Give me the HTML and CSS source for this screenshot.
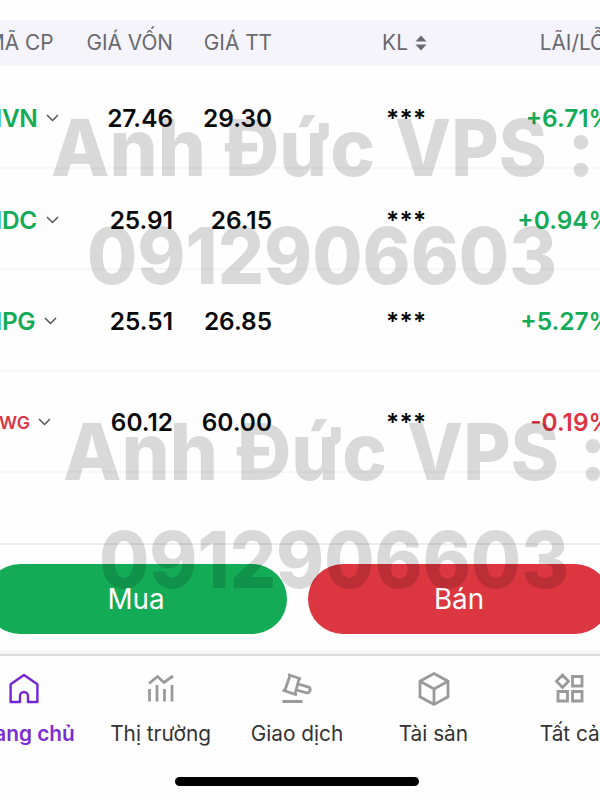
FILE: index.html
```html
<!DOCTYPE html>
<html lang="vi">
<head>
    <meta charset="UTF-8">
    <meta name="viewport" content="width=device-width, initial-scale=1.0">
    <title>Danh mục</title>
    <link rel="stylesheet" href="styles.css">
</head>
<body>
    <div class="app">
        <main class="portfolio">
            <div class="row head">
                <span class="code">MÃ CP</span>
                <span class="cost">GIÁ VỐN</span>
                <span class="price">GIÁ TT</span>
                <span class="volume">KL
                    <svg class="sort" width="12" height="16" viewBox="0 0 12 16"><path d="M6 0.5L11.500 6.500H0.500zM6 15.500L0.500 9.500H11.500z" fill="#69696f"/></svg>
                </span>
                <span class="profit">LÃI/LỖ</span>
            </div>
            <div class="row up">
                <span class="code">HVN <svg class="chevron" width="13" height="8" viewBox="0 0 13 8"><path d="M1 1L6.5 6.5L12 1"/></svg></span>
                <span class="cost">27.46</span>
                <span class="price">29.30</span>
                <span class="volume">***</span>
                <span class="profit">+6.71%</span>
            </div>
            <div class="row up">
                <span class="code">HDC <svg class="chevron" width="13" height="8" viewBox="0 0 13 8"><path d="M1 1L6.5 6.5L12 1"/></svg></span>
                <span class="cost">25.91</span>
                <span class="price">26.15</span>
                <span class="volume">***</span>
                <span class="profit">+0.94%</span>
            </div>
            <div class="row up">
                <span class="code">HPG <svg class="chevron" width="13" height="8" viewBox="0 0 13 8"><path d="M1 1L6.5 6.5L12 1"/></svg></span>
                <span class="cost">25.51</span>
                <span class="price">26.85</span>
                <span class="volume">***</span>
                <span class="profit">+5.27%</span>
            </div>
            <div class="row down">
                <span class="code small">MWG <svg class="chevron" width="13" height="8" viewBox="0 0 13 8"><path d="M1 1L6.5 6.5L12 1"/></svg></span>
                <span class="cost">60.12</span>
                <span class="price">60.00</span>
                <span class="volume">***</span>
                <span class="profit">-0.19%</span>
            </div>
        </main>
        <div class="actions">
            <button class="buy">Mua</button>
            <button class="sell">Bán</button>
        </div>
        <nav class="tabs">
            <a class="tab active">
                <svg width="34" height="36" viewBox="0 0 34 36"><path d="M3.600 13.200L17 4L30.400 13.200V31H21V25a4 4 0 0 0-8 0V31H3.600z"/></svg>
                <span>Trang chủ</span>
            </a>
            <a class="tab">
                <svg width="34" height="36" viewBox="0 0 34 36"><path d="M5 12.500L13.500 5.500L20 11.500L29 5M5.500 18V30.500M13 14V30.500M20.500 18V30.500M28 14V30.500"/></svg>
                <span>Thị trường</span>
            </a>
            <a class="tab">
                <svg width="34" height="36" viewBox="0 0 34 36"><path d="M8 3.500L21 8M2.500 19L17 24M10 4.500L5 19M19 8L15 23M18 13L28 15.800a3.100 3.100 0 0 1-1.500 6L16.500 19M2.500 30.500H22.500"/></svg>
                <span>Giao dịch</span>
            </a>
            <a class="tab">
                <svg width="34" height="36" viewBox="0 0 34 36"><path d="M18 2.500L32 10.200V25.800L18 33.500L4 25.800V10.200zM4 10.200L18 18L32 10.200M18 18V33.500"/></svg>
                <span>Tài sản</span>
            </a>
            <a class="tab">
                <svg width="34" height="36" viewBox="0 0 34 36"><path d="M9.500 4L15.500 10.200L9.500 16.400L3.500 10.200zM19.500 5.500H29V15H19.500zM5 20.500H14.500V30H5zM19.500 20.500H29V30H19.500z"/></svg>
                <span>Tất cả</span>
            </a>
        </nav>
        <div class="home-indicator"></div>
    </div>
    <svg class="watermark" width="600" height="800" viewBox="0 0 600 800">
        <g>
            <text x="51" y="176" textLength="155" lengthAdjust="spacingAndGlyphs">Anh</text>
            <text x="225" y="176" textLength="150" lengthAdjust="spacingAndGlyphs">Đức</text>
            <text x="395" y="176" textLength="152" lengthAdjust="spacingAndGlyphs">VPS</text>
            <text x="567" y="176">:</text>
            <text x="87" y="284" textLength="470" lengthAdjust="spacingAndGlyphs">0912906603</text>
        </g>
        <g transform="translate(12 304)">
            <text x="51" y="176" textLength="155" lengthAdjust="spacingAndGlyphs">Anh</text>
            <text x="225" y="176" textLength="150" lengthAdjust="spacingAndGlyphs">Đức</text>
            <text x="395" y="176" textLength="152" lengthAdjust="spacingAndGlyphs">VPS</text>
            <text x="567" y="176">:</text>
            <text x="87" y="284" textLength="470" lengthAdjust="spacingAndGlyphs">0912906603</text>
        </g>
    </svg>
</body>
</html>
```

FILE: styles.css
```css
* {
    box-sizing: border-box;
}
body {
    margin: 0;
    height: 800px;
    overflow: hidden;
    position: relative;
    background-color: #fefefe;
    font-family: Inter, "Liberation Sans", sans-serif;
}
/* phone screen is wider than the window and cut on both sides */
.app {
    width: 682px;
    height: 800px;
    margin-left: -44px;
    padding-top: 20px;
    display: flex;
    flex-direction: column;
}
.portfolio {
    height: 525px;
    border-bottom: 2px solid #ececee;
}
.row {
    display: grid;
    grid-template-columns: 97px 90px 99px 174px 1fr;
    align-items: center;
    height: 101.4px;
    padding: 2px 25px 0 30px;
    border-bottom: 2px solid #f7f7f8;
    font-size: 24.4px;
    font-weight: 600;
    color: #0a0a0a;
    white-space: nowrap;
}
.head {
    height: 46px;
    margin-bottom: 1.5px;
    padding-top: 0;
    border: none;
    background-color: #f5f4fb;
    color: #69696f;
    font-size: 20.8px;
    font-weight: 400;
    line-height: 24px;
    padding-bottom: 1px;
}
.cost, .price, .profit {
    text-align: right;
}
.head .profit {
    padding-right: 7px;
}
.volume {
    padding-left: 114px;
    letter-spacing: 0.3px;
}
.head .volume {
    padding-left: 110px;
}
.sort {
    margin-left: 1px;
    vertical-align: -1px;
}
.code {
    margin-left: -2px;
    letter-spacing: -0.3px;
}
.head .code {
    margin-left: 0;
    letter-spacing: 0;
}
.chevron {
    margin-left: 3px;
    vertical-align: 5px;
    fill: none;
    stroke: #555;
    stroke-width: 1.5;
}
.code.small {
    margin-left: -3px;
    font-size: 17.8px;
}
.small .chevron {
    margin-left: 4px;
    vertical-align: 3px;
}
.up .code, .up .profit {
    color: #14ab57;
}
.down .code, .down .profit {
    color: #dc3545;
}
.actions {
    display: grid;
    grid-template-columns: 1fr 1fr;
    gap: 21px;
    height: 109px;
    padding: 19px 28px 20px 29px;
}
.actions button {
    border: none;
    border-radius: 35px;
    color: #fff;
    font-family: inherit;
    font-size: 27.8px;
}
.buy {
    background-color: #14ab57;
}
.sell {
    background-color: #dc3640;
}
.tabs {
    display: grid;
    grid-template-columns: repeat(5, 1fr);
    height: 122px;
    padding-top: 15px;
    border-top: 2px solid #dcdcdc;
    box-shadow: 0 -3px 6px rgba(0, 0, 0, 0.05);
}
.tab {
    display: flex;
    flex-direction: column;
    align-items: center;
    gap: 13px;
    color: #333;
    font-size: 20.8px;
    line-height: 28px;
}
.tab svg {
    fill: none;
    stroke: #9a9a9a;
    stroke-width: 2.8;
}
.tab.active {
    color: #7a2fd0;
    font-weight: 600;
}
.tab.active svg {
    stroke: #7526d3;
    stroke-width: 2.4;
    stroke-linejoin: round;
}
.home-indicator {
    width: 244px;
    height: 9px;
    margin: 1px auto 0;
    border-radius: 5px;
    background-color: #000;
}
.watermark {
    position: absolute;
    top: 0;
    left: 0;
    fill: rgba(0, 0, 0, 0.145);
    font-family: Inter, sans-serif;
    font-size: 79px;
    font-weight: 800;
}
```
